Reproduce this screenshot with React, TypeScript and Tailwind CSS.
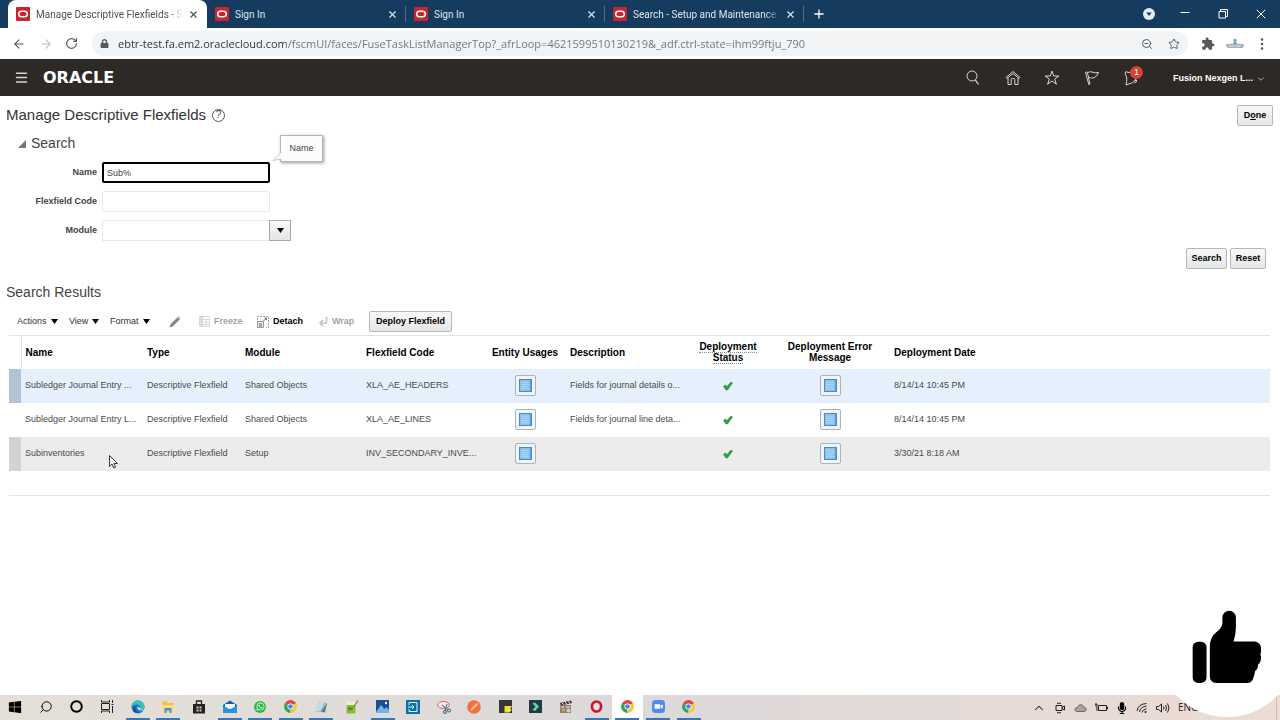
import React, { useState } from 'react';
import { Search, Star, ChevronDown, ChevronUp, Plus, X, Menu, ArrowLeft, ArrowRight, RotateCw, ZoomOut } from 'lucide-react';
import { FaWindows, FaLock, FaWhatsapp, FaMicrophone } from 'react-icons/fa';
import { MdExtension } from 'react-icons/md';

interface Flexfield {
  name: string;
  type: string;
  module: string;
  code: string;
  description: string;
  date: string;
}

const tabs = ['Manage Descriptive Flexfields - S', 'Sign In', 'Sign In', 'Search - Setup and Maintenance'];

const flexfields: Flexfield[] = [
  { name: 'Subledger Journal Entry ...', type: 'Descriptive Flexfield', module: 'Shared Objects', code: 'XLA_AE_HEADERS', description: 'Fields for journal details o...', date: '8/14/14 10:45 PM' },
  { name: 'Subledger Journal Entry L...', type: 'Descriptive Flexfield', module: 'Shared Objects', code: 'XLA_AE_LINES', description: 'Fields for journal line deta...', date: '8/14/14 10:45 PM' },
  { name: 'Subinventories', type: 'Descriptive Flexfield', module: 'Setup', code: 'INV_SECONDARY_INVE...', description: '', date: '3/30/21 8:18 AM' },
];

const rowStyles = ['bg-[#e5f0fc]', 'bg-white', 'bg-[#ececec]'];
const gutterStyles = ['bg-[#b3c3d4]', 'bg-white', 'bg-[#d3d3d3]'];

const buttonClass = 'h-[21px] rounded-xs border border-[#b4b7ba] bg-linear-to-b from-[#f8f8f8] to-[#e6e7e9] font-bold text-black text-[9px] leading-none whitespace-nowrap';

function Favicon() {
  return (
    <svg className="size-[14px] shrink-0" viewBox="0 0 14 14">
      <rect width="14" height="14" rx="1" fill="#c8252f" />
      <rect x="2.7" y="4.2" width="8.6" height="5.6" rx="2.8" fill="none" stroke="#fff" strokeWidth="1.5" />
    </svg>
  );
}

function TabStrip() {
  return (
    <div className="flex h-7 items-stretch bg-[#153c5f] pl-2 font-[Roboto,'Noto_Sans',sans-serif] text-[10px]">
      {tabs.map((tab, i) => (
        <div
          key={i}
          className={`flex w-[199px] items-center pl-2 ${i === 0 ? 'rounded-t-lg bg-white text-[#4b5257]' : 'text-[#dbe6ef]'}`}
        >
          <Favicon />
          <span className={`ml-[6px] w-[147px] whitespace-nowrap ${tab.length > 10 ? 'mask-r-from-90% mask-r-to-100%' : ''}`}>{tab}</span>
          <button aria-label="Close tab" className="ml-[5px]">
            <X className="size-[11px]" strokeWidth={2.4} />
          </button>
          {i > 0 && <span className="ml-auto h-4 border-r border-[#4d6d89]"></span>}
        </div>
      ))}
      <button aria-label="New tab" className="ml-2 text-white">
        <Plus className="size-[14px]" strokeWidth={2.2} />
      </button>
      <div className="ml-auto flex items-center text-white">
        <button aria-label="Search tabs" className="mr-[25px]">
          <svg className="size-3" viewBox="0 0 12 12">
            <circle cx="6" cy="6" r="6" fill="#e4eef6" />
            <path d="M3.3 4.5h5.4L6 8z" fill="#153c5f" />
          </svg>
        </button>
        <button aria-label="Minimize" className="mr-7">
          <svg className="size-[10px]" viewBox="0 0 10 10" stroke="currentColor">
            <path d="M0.5 3.5h9" />
          </svg>
        </button>
        <button aria-label="Restore" className="mr-7">
          <svg className="size-[10px]" viewBox="0 0 10 10" fill="none" stroke="currentColor">
            <path d="M1 2.5h6.5V9H1zM2.5 2.5v-2H9.5V7.5H7.5" />
          </svg>
        </button>
        <button aria-label="Close window" className="mr-[14px]">
          <svg className="size-[10px]" viewBox="0 0 10 10" stroke="currentColor">
            <path d="M0.8 0.8l8.4 8.4M9.2 0.8L0.8 9.2" />
          </svg>
        </button>
      </div>
    </div>
  );
}

function AddressBar() {
  return (
    <div className="flex h-[31px] items-center bg-white pr-4 pl-3 font-['Open_Sans','Noto_Sans',sans-serif] text-[#55595e]">
      <button aria-label="Back"><ArrowLeft className="size-[14px]" /></button>
      <button aria-label="Forward" className="ml-[13px] text-[#bfc2c5]"><ArrowRight className="size-[14px]" /></button>
      <button aria-label="Reload" className="ml-3"><RotateCw className="size-[13px]" strokeWidth={2.2} /></button>
      <div className="ml-[14px] flex h-[25px] flex-1 items-center rounded-full bg-[#f1f3f4] px-2">
        <FaLock className="size-[9px]" />
        {/* host is darker than the path */}
        <input
          aria-label="Address"
          defaultValue="ebtr-test.fa.em2.oraclecloud.com/fscmUI/faces/FuseTaskListManagerTop?_afrLoop=4621599510130219&_adf.ctrl-state=ihm99ftju_790"
          className="ml-[9px] h-5 flex-1 bg-[linear-gradient(90deg,#2c3034_168px,#6f7478_168px)] bg-clip-text text-[11px] text-transparent outline-none"
        />
        <button aria-label="Zoom"><ZoomOut className="size-[12px]" /></button>
        <button aria-label="Bookmark" className="ml-[15px]"><Star className="size-[12px]" /></button>
      </div>
      <button aria-label="Extensions" className="ml-[13px]"><MdExtension className="size-[14px]" /></button>
      <button aria-label="Profile" className="ml-[10px]">
        <svg className="h-3 w-5" viewBox="0 0 20 12">
          <path d="M0.5 6.5Q10 4.5 19.5 6.5L17.5 10H2.5z" fill="#a3abb0" />
          <path d="M3 8h14M5 6.5v3M8 6.5v3M11 6.5v3M14 6.5v3" stroke="#e3e6e8" strokeWidth="0.7" />
          <circle cx="10" cy="2.3" r="1.5" fill="#4aa3bd" />
          <path d="M8.5 4h3v2.5h-3z" fill="#62a7b9" />
        </svg>
      </button>
      <button aria-label="Chrome menu" className="ml-[15px]">
        <svg className="h-3 w-[4px]" viewBox="0 0 4 12" fill="currentColor">
          <circle cx="2" cy="1.5" r="1.3" /><circle cx="2" cy="6" r="1.3" /><circle cx="2" cy="10.5" r="1.3" />
        </svg>
      </button>
    </div>
  );
}

function OracleHeader() {
  return (
    <header className="flex h-[37px] items-center bg-[#2d2927] px-[14px] text-[#d8d4d0]">
      <button aria-label="Navigator"><Menu className="size-[15px]" strokeWidth={2.4} /></button>
      <span className="ml-[14px] font-['DejaVu_Sans',sans-serif] text-[16px] leading-none font-bold text-white">ORACLE</span>
      <div className="ml-auto flex items-center">
        <button aria-label="Search" className="mr-6">
          <svg className="size-4" viewBox="0 0 16 16" fill="none" stroke="currentColor">
            <circle cx="7" cy="6" r="5" />
            <path d="M10.3 9.8L13.5 14.5" strokeWidth="1.3" />
          </svg>
        </button>
        <button aria-label="Home" className="mr-[23px]">
          <svg className="size-4" viewBox="0 0 16 16" fill="none" stroke="currentColor" strokeLinejoin="round">
            <path d="M1 7.5L8 1.5l7 6-1 1L8 3.5l-6 5zM3 8v6.500h3.200V9.500q0-1 1-1h1.600q1 0 1 1v5H13V8" />
          </svg>
        </button>
        <button aria-label="Favorites" className="mr-6">
          <svg className="size-4" viewBox="0 0 16 16" fill="none" stroke="currentColor" strokeLinejoin="miter">
            <path d="M8 1l1.700 5h5.300l-4.300 3.100 1.700 5.100L8 11l-4.400 3.200 1.700-5.100L1 6h5.300z" />
          </svg>
        </button>
        <button aria-label="Watchlist" className="mr-[23px]">
          <svg className="size-4" viewBox="0 0 16 16" fill="none" stroke="currentColor" strokeLinejoin="round">
            <path d="M1.500 2.500l1.300-.700.500 1q3-2 5.700-.500 2.700 1.200 5.500 0-1 3-3.500 5-2.500 1.200-4.500.500-1.200-.500-2 .200l1.500 6-1.200.500zM3.300 2.800L5 8.500" />
          </svg>
        </button>
        <button aria-label="Notifications" className="relative mr-[34px]">
          <svg className="size-4" viewBox="0 0 16 16" fill="none" stroke="currentColor" strokeLinejoin="round">
            <path d="M3 1.500l2 1Q12 1 13 6q.500 3.500-2 5.500l-1.500 1.200L3 15l.700-3.500Q4 9 3.500 7T2 4zM11 11l2.500-1q.500 2.500-2 3" />
          </svg>
          <span className="absolute -top-1 left-[7px] flex size-[13px] items-center justify-center rounded-full bg-[#d8412f] text-[9px] leading-none text-white">1</span>
        </button>
        <button className="flex items-center pt-[3px] text-[9px] font-bold text-white">
          Fusion Nexgen L...
          <ChevronDown className="ml-[3px] size-[10px]" strokeWidth={1.5} />
        </button>
      </div>
    </header>
  );
}

function Triangle() {
  return (
    <svg className="h-[5px] w-[7px]" viewBox="0 0 7 5">
      <path d="M0 0h7L3.500 5z" fill="#000" />
    </svg>
  );
}

function SearchForm() {
  const [name, setName] = useState('Sub%');

  return (
    <form onSubmit={(e) => e.preventDefault()}>
      <h2 className="flex h-[19px] items-center pl-3 text-[14px] text-[#444]">
        <svg className="mr-[5px] size-2" viewBox="0 0 8 8"><path d="M8 0v8H0z" fill="#777" /></svg>
        Search
      </h2>
      <div className="mt-[9px] grid grid-cols-[91px_1fr] items-center gap-x-[5px] gap-y-2 text-[9px] text-[#444]">
        <label htmlFor="name" className="text-right font-bold">Name</label>
        <div className="relative w-[168px]">
          <input id="name" value={name} onChange={(e) => setName(e.target.value)} className="block h-[21px] w-full rounded-xs border-2 border-black px-[3px] outline-none" />
          <div className="absolute -top-[27px] left-[178px] flex h-[27px] w-[43px] items-center justify-center border border-[#b5b5b5] bg-[#fcfcfc] shadow-[1px_1px_3px_#999]">
            Name
            <svg className="absolute top-[15px] -left-[9px] h-[11px] w-[10px]" viewBox="0 0 10 11">
              <path d="M9.500 1L1 9.500 9.500 8" fill="#fcfcfc" stroke="#c4c4c4" />
            </svg>
          </div>
        </div>
        <label htmlFor="code" className="text-right font-bold">Flexfield Code</label>
        <input id="code" className="h-[21px] w-[168px] rounded-xs border border-[#e8e8e8] px-1 outline-none" />
        <label htmlFor="module" className="text-right font-bold">Module</label>
        <div className="relative w-[189px]">
          <select id="module" className="block h-[21px] w-full appearance-none border border-[#e8e8e8] px-1">
            <option></option>
          </select>
          <span className="pointer-events-none absolute inset-y-0 right-0 flex w-[22px] items-center justify-center border border-[#aaa] bg-linear-to-b from-[#f8f8f8] to-[#e4e5e7]">
            <Triangle />
          </span>
        </div>
      </div>
      <div className="mt-[7px] flex justify-end gap-[3px] pr-[14px]">
        <button type="submit" className={`${buttonClass} w-[41px]`}>Search</button>
        <button type="reset" className={`${buttonClass} w-9`}>Reset</button>
      </div>
    </form>
  );
}

function Toolbar() {
  return (
    <div className="mt-[9px] flex h-[24px] items-center pb-[3px] pl-2 text-[9px] text-[#333]">
      <button className="flex w-[52px] items-center gap-1">Actions<Triangle /></button>
      <button className="flex w-[41px] items-center gap-1">View<Triangle /></button>
      <button className="flex w-[59px] items-center gap-1">Format<Triangle /></button>
      <button aria-label="Edit" className="w-[30px]">
        <svg className="size-3" viewBox="0 0 12 12" fill="#858585">
          <path d="M0.500 11.500l1-3.200L8.800 1l2.200 2.200L3.700 10.500zM9.400.500l.600-.300 1.800 1.800-.300.600z" />
        </svg>
      </button>
      <button className="flex w-[58px] items-center font-bold text-[#a3a3a3]" disabled>
        <svg className="mr-1 size-[11px]" viewBox="0 0 11 11" fill="none" stroke="#cfcfcf">
          <path d="M.500.500h10v10H.500zM3.500 0v11M.500 3.500h10M.500 6h10M.500 8.500h10M7 3.500v7" strokeWidth="0.800" />
          <path d="M1 1h2v9H1z" fill="#ddd" stroke="none" />
        </svg>
        Freeze
      </button>
      <button className="flex w-[61px] items-center font-bold text-black">
        <svg className="mr-1 size-[12px]" viewBox="0 0 12 12" fill="none" stroke="#999">
          <path d="M.500 4V.500h11v11H9" strokeDasharray="2 1" />
          <path d="M.500 5.500h6v6h-6z" fill="#e8e8e8" />
          <path d="M2 8h3M2 10h3M6.500 5L9.500 2M7.500 2h2v2" stroke="#666" />
        </svg>
        Detach
      </button>
      <button className="flex w-[51px] items-center font-bold text-[#a3a3a3]" disabled>
        <svg className="mr-1 size-[10px]" viewBox="0 0 10 10" fill="none" stroke="#c4c4c4" strokeWidth="1.600">
          <path d="M8.500 0v6H2M5 3L2 6l3 3" />
        </svg>
        Wrap
      </button>
      <button className={`${buttonClass} w-[83px]`}>Deploy Flexfield</button>
    </div>
  );
}

function DetailButton({ label }: { label: string }) {
  return (
    <button aria-label={label} className="mx-auto flex size-[21px] items-center justify-center rounded-xs border border-[#a9b4bf] bg-[#f1f5f9]">
      <svg className="size-[13px]" viewBox="0 0 12 12">
        <rect x="0.500" y="0.500" width="11" height="11" fill="#8fc4ef" stroke="#4a8cc4" />
        <path d="M2 3h7M2 5h8M2 7h6M2 9h8" stroke="#a9d2f4" />
        <path d="M10.500 1v10" stroke="#5b9bd3" />
      </svg>
    </button>
  );
}

function ResultsTable() {
  return (
    <table className="w-full table-fixed border-t border-b border-[#e3e3e3] text-left text-[9px] text-[#4a4a4a]">
      <colgroup>
        <col className="w-[12px]" />
        <col className="w-[122px]" />
        <col className="w-[98px]" />
        <col className="w-[121px]" />
        <col className="w-[122px]" />
        <col className="w-[82px]" />
        <col className="w-[120px]" />
        <col className="w-[84px]" />
        <col className="w-[120px]" />
        <col />
      </colgroup>
      <thead>
        <tr className="h-[33px] text-[10px] leading-[11px] text-black">
          <th className="border-r border-[#e3e3e3]"></th>
          <th className="pl-1">Name</th>
          <th className="pl-1">Type</th>
          <th className="pl-1">Module</th>
          <th className="pl-1">Flexfield Code</th>
          <th className="text-center whitespace-nowrap">Entity Usages</th>
          <th className="pl-1">Description</th>
          <th className="text-center">
            <span className="border-b border-dotted border-[#888]">Deployment</span>
            <br />
            <span className="border-b border-dotted border-[#888]">Status</span>
          </th>
          <th className="text-center">Deployment Error<br />Message</th>
          <th className="pl-1">Deployment Date</th>
        </tr>
      </thead>
      <tbody>
        {flexfields.map((row, i) => (
          <tr key={row.code} className={`h-[34px] whitespace-nowrap ${rowStyles[i]}`}>
            <td className={gutterStyles[i]}></td>
            <td className="pl-1">{row.name}</td>
            <td className="pl-1">{row.type}</td>
            <td className="pl-1">{row.module}</td>
            <td className="pl-1">{row.code}</td>
            <td><DetailButton label="Entity usages" /></td>
            <td className="pl-1">{row.description}</td>
            <td>
              <svg className="mx-auto size-[10px]" viewBox="0 0 10 10">
                <path d="M0.500 5.500L2.300 4l1.700 1.500L8 1l1.500 1L4.500 9H3z" fill="#2fa33a" stroke="#1d7a2b" strokeWidth="0.500" />
              </svg>
            </td>
            <td><DetailButton label="Deployment error message" /></td>
            <td className="pl-1">{row.date}</td>
          </tr>
        ))}
        <tr className="h-[25px]"><td colSpan={10}></td></tr>
      </tbody>
    </table>
  );
}

function ChromeIcon() {
  return (
    <svg className="size-[13px]" viewBox="0 0 14 14">
      <path d="M7 7L1 3.500A7 7 0 0 1 13 3.500z" fill="#e2483c" />
      <path d="M7 7L1 3.500A7 7 0 0 0 7 14z" fill="#33a457" />
      <path d="M7 7h0L13 3.500A7 7 0 0 1 7 14z" fill="#f7c934" />
      <circle cx="7" cy="7" r="3.300" fill="#fff" />
      <circle cx="7" cy="7" r="2.500" fill="#4285f4" />
    </svg>
  );
}

const taskbarApps = [
  { name: 'Start', icon: <FaWindows className="size-[14px] text-black" /> },
  { name: 'Search', icon: <Search className="size-[14px] -scale-x-100 text-black" strokeWidth={1.6} /> },
  { name: 'Cortana', icon: <svg className="size-[13px]" viewBox="0 0 13 13"><circle cx="6.500" cy="6.500" r="5.300" fill="none" stroke="#000" strokeWidth="1.900" /></svg> },
  {
    name: 'Task View',
    icon: (
      <svg className="size-[14px]" viewBox="0 0 14 14" fill="none" stroke="#222">
        <path d="M1.500 3.500h8v6h-8zM1.500 0v2h8V0M1.500 13v-2h8v2M12.500 0v3M12.500 6v7M11.500 4.500h2" />
      </svg>
    ),
  },
  {
    name: 'Edge',
    open: true,
    icon: (
      <svg className="size-[14px]" viewBox="0 0 14 14">
        <circle cx="7" cy="7" r="6.500" fill="#1b78c9" />
        <path d="M0.500 6.500A6.500 6.500 0 0 1 13.500 7q0 3-3.500 2.700-2-.200-1-1.700 1-3-2.500-3.500Q2.500 4.300.500 6.500z" fill="#39c3b4" />
        <path d="M5 6q-2 4 2 6.500Q4 13.500 2 11 1.500 7 5 6z" fill="#114f9c" />
        <path d="M6.500 6.500q-1 4 5 4l1-1.500q-3.500 1.500-3.500-1z" fill="#e9e5df" />
      </svg>
    ),
  },
  {
    name: 'File Explorer',
    open: true,
    icon: (
      <svg className="size-[14px]" viewBox="0 0 14 14">
        <path d="M1 1.500h5l1 1.500h6v9H1z" fill="#f2c24f" />
        <path d="M1 5h12v7H1z" fill="#fbdc84" />
        <path d="M3.500 13V8h7v5H8.500v-2.500h-3V13z" fill="#4a93c9" />
      </svg>
    ),
  },
  {
    name: 'Store',
    icon: (
      <svg className="size-[14px]" viewBox="0 0 14 14">
        <path d="M1 4h12v9.500H1z" fill="#26211f" />
        <path d="M4.500 4V1h5v3" fill="none" stroke="#26211f" strokeWidth="1.300" />
        <path d="M4.500 6.500h2v2h-2zM7.500 6.500h2v2h-2zM4.500 9.500h2v2h-2zM7.500 9.500h2v2h-2z" fill="#cfc8bb" />
      </svg>
    ),
  },
  {
    name: 'Mail',
    open: true,
    icon: (
      <svg className="size-[14px]" viewBox="0 0 14 14">
        <path d="M0 5l7-4.500L14 5v8H0z" fill="#1260a8" />
        <path d="M2 4h10v5H2z" fill="#f3f6f8" />
        <path d="M0 5.500l7 4 7-4V13H0z" fill="#2795dd" />
      </svg>
    ),
  },
  { name: 'WhatsApp', open: true, icon: <span className="flex size-[12px] items-center justify-center rounded-full bg-[#2fb84c]"><FaWhatsapp className="size-[9px] text-white" /></span> },
  { name: 'Chrome', open: true, icon: <ChromeIcon /> },
  {
    name: 'Notes',
    open: true,
    icon: (
      <svg className="size-[14px]" viewBox="0 0 14 14">
        <path d="M5 1.500l8 1.500-2 9.500-10-1z" fill="#9dbfcd" />
        <path d="M5 1.500l5 1-3.500 8-5.500 1z" fill="#c8dbe2" />
        <path d="M13 3l-2 9.500-4-1z" fill="#56808f" />
      </svg>
    ),
  },
  {
    name: 'Notepad++',
    icon: (
      <svg className="size-[14px]" viewBox="0 0 14 14">
        <path d="M1.500 1.500h9v12h-9z" fill="#e8eedb" />
        <path d="M1.500 5h9v8.500h-9z" fill="#87bc3b" />
        <path d="M4 7v4M4 7l3 3V7" fill="none" stroke="#44731b" />
        <path d="M13 .500L8.500 7" stroke="#8c7a55" strokeWidth="1.300" />
      </svg>
    ),
  },
  {
    name: 'Photos',
    open: true,
    icon: (
      <svg className="size-[13px]" viewBox="0 0 13 13">
        <path d="M0 0h13v13H0z" fill="#174f91" />
        <path d="M0 12l5-7 3.500 4 2-2 2.500 3v3H0z" fill="#6db7eb" />
        <circle cx="10" cy="3" r="1.200" fill="#fff" />
      </svg>
    ),
  },
  {
    name: 'Scanner',
    icon: (
      <svg className="size-[14px]" viewBox="0 0 14 14" fill="none" stroke="#e4f4fb">
        <path d="M0 0h14v14H0z" fill="#0a72a3" stroke="none" />
        <path d="M3 5V2.500h8v9H3V9M2 7h6M6 5l2 2-2 2" />
      </svg>
    ),
  },
  {
    name: 'Snipping Tool',
    icon: (
      <svg className="size-[14px]" viewBox="0 0 14 14" fill="none">
        <ellipse cx="6.500" cy="5" rx="5.800" ry="3.500" fill="#f5eeee" stroke="#d45760" />
        <path d="M5 5l6 5M10 4L8 11" stroke="#64798b" strokeWidth="1.200" />
        <circle cx="12" cy="10.500" r="1.500" stroke="#3c5c83" />
        <circle cx="8" cy="12" r="1.500" stroke="#3c5c83" />
      </svg>
    ),
  },
  {
    name: 'Postman',
    icon: (
      <svg className="size-[14px]" viewBox="0 0 14 14">
        <circle cx="7" cy="7" r="6.800" fill="#f2703b" />
        <path d="M3 11.500l2-4 5-4.500 1 1-4.500 5z" fill="#fbc6a9" />
      </svg>
    ),
  },
  {
    name: 'Sticky Notes',
    icon: (
      <svg className="size-[13px]" viewBox="0 0 13 13">
        <path d="M0 0h13v13H0z" fill="#373737" />
        <path d="M5.500 6H13l-3.500 6.500h-4z" fill="#f5de25" />
        <path d="M9.500 9.500H13L9.500 13z" fill="#fff5a8" />
      </svg>
    ),
  },
  {
    name: 'Filmora',
    icon: (
      <svg className="size-[13px]" viewBox="0 0 13 13">
        <path d="M0 0h13v13H0z" fill="#223b43" />
        <path d="M3.500 3.500l2.500-1 4 4L6 11l-2.500-1L6.500 6.500z" fill="#58d9bb" />
      </svg>
    ),
  },
  {
    name: 'Movie Maker',
    icon: (
      <svg className="size-[14px]" viewBox="0 0 14 14">
        <path d="M1 5h11v8H1z" fill="#8d8474" />
        <path d="M1 3l11-2.500L13 3 2 5.500z" fill="#38322c" />
        <path d="M3 3l2 1.500M6 2.300l2 1.500M9 1.500l2 1.500M2 7h3M7 7h4" stroke="#efe8d8" />
        <path d="M3 8.500h3v3H3z" fill="#c89f53" />
        <circle cx="9.500" cy="10.500" r="2" fill="#d9cdb6" />
      </svg>
    ),
  },
  { name: 'Opera', open: true, icon: <svg className="size-[13px]" viewBox="0 0 13 13"><ellipse cx="6.500" cy="6.500" rx="4.600" ry="5" fill="#f3dedd" stroke="#c8152c" strokeWidth="2.600" /></svg> },
  { name: 'Chrome', open: true, active: true, icon: <ChromeIcon /> },
  {
    name: 'Zoom',
    open: true,
    icon: (
      <svg className="size-[13px]" viewBox="0 0 13 13">
        <rect width="13" height="13" rx="3.500" fill="#4a8cf0" />
        <path d="M2.500 4.200h5.700v4.600H2.500zM8.800 5.800l2-1.500v4.400l-2-1.500z" fill="#fff" />
      </svg>
    ),
  },
  { name: 'Chrome', open: true, icon: <ChromeIcon /> },
];

function Taskbar() {
  return (
    <footer className="flex h-[25px] bg-linear-to-r from-[#e4e0d7] via-[#ddd8da] to-[#ecdcd3] font-['Open_Sans','Noto_Sans',sans-serif] text-[#222]">
      <nav className="flex w-[704px]">
        {taskbarApps.map((app, i) => (
          <button key={i} aria-label={app.name} className={`flex flex-1 flex-col items-center justify-between ${app.active ? 'bg-white' : ''}`}>
            <span className="flex h-[23px] items-center">{app.icon}</span>
            {app.open && <span className="h-[2px] w-6 bg-[#3a76b4]"></span>}
          </button>
        ))}
      </nav>
      <div className="ml-auto flex items-center gap-2">
        <ChevronUp className="size-[14px]" strokeWidth={1.8} />
        <svg className="size-3" viewBox="0 0 12 12" fill="none" stroke="currentColor">
          <path d="M2 3.500h6v5H2zM8 5.500l2.500-1.500v4L8 6.500M3 1.500q2-1 4 0M3 10.500q2 1 4 0" />
        </svg>
        <svg className="h-3 w-[13px]" viewBox="0 0 13 12">
          <path d="M3 9.500Q.500 9 .800 7.200 1.500 5.300 3.500 5.300 4.500 2.500 7 2.700q2.500.300 3 2.700 2.300.200 2.200 2.200-.200 1.900-2.200 1.900z" fill="#a9a39e" stroke="#5c5752" strokeWidth="0.800" />
        </svg>
        <svg className="h-3 w-[13px]" viewBox="0 0 13 12" fill="none" stroke="currentColor">
          <path d="M3.500 8.500v-5h8v5h-8zM11.500 5h1v2h-1M0 3h3M1 1v2.500q0 1.500 1 1.500v4" />
        </svg>
        <FaMicrophone className="size-3 text-black" />
        <svg className="size-3" viewBox="0 0 12 12" fill="none" stroke="currentColor">
          <path d="M1 9Q2 2 10.500 1.500M3.500 10Q4 5 10.500 4M6 10.500Q6.500 7.500 10.500 6.700" />
          <circle cx="9.500" cy="10" r="1" fill="currentColor" stroke="none" />
        </svg>
        <svg className="h-3 w-[14px]" viewBox="0 0 14 12" fill="none" stroke="currentColor">
          <path d="M.500 4.500h2L5.500 2v8l-3-2.500h-2zM7.500 4.500q1 1.500 0 3M9.500 3q2 3 0 6M11.500 1.500q3 4.500 0 9" />
        </svg>
        <span className="w-[98px] text-[10px]">ENG</span>
      </div>
      <button aria-label="Show desktop" className="w-1 border-l border-[#c9bdb5]"></button>
    </footer>
  );
}

export default function App() {
  return (
    <div className="relative flex min-h-screen flex-col overflow-hidden bg-white font-['Liberation_Sans',Arial,sans-serif]">
      <TabStrip />
      <AddressBar />
      <OracleHeader />

      <main className="flex-1 pl-[6px]">
        <div className="flex h-[38px] items-center pr-[7px]">
          <h1 className="text-[15px] text-[#333]">Manage Descriptive Flexfields</h1>
          <button aria-label="Help" className="ml-[6px] flex size-[13px] items-center justify-center rounded-full border border-[#555] text-[10px] leading-none text-[#444]">?</button>
          <button className={`${buttonClass} ml-auto w-9`}>D<u>o</u>ne</button>
        </div>
        <SearchForm />
        <h2 className="mt-[13px] flex h-5 items-center text-[14px] text-[#444]">Search Results</h2>
        <div className="pr-[10px] pl-[3px]">
          <Toolbar />
          <ResultsTable />
        </div>
      </main>

      <Taskbar />

      {/* mouse pointer */}
      <svg className="absolute top-[455px] left-[109px] h-[14px] w-[9px]" viewBox="0 0 9 14">
        <path d="M.500.500v11L3 9l1.800 4 1.700-.800L4.800 8.500H8.500z" fill="#fff" stroke="#222" strokeWidth="0.900" />
      </svg>

      {/* like badge */}
      <div className="absolute right-[-17px] bottom-[3px] flex size-[140px] items-center justify-center rounded-full bg-white">
        <svg className="h-[74px] w-[70px]" viewBox="576 56 212 222" fill="#000">
          <rect x="578" y="151" width="42" height="125" rx="17" />
          <path d="M630 165q0-28 22-45 16-12 16-25V78a20.500 20.500 0 0 1 41 0v30q0 20-7 42h64q18 3 19 20v14q-4 5 0 12 1 18-9 24 0 14-9 20-1 9-5 20-4 16-20 16h-92q-20-2-20-20z" />
        </svg>
      </div>
    </div>
  );
}
